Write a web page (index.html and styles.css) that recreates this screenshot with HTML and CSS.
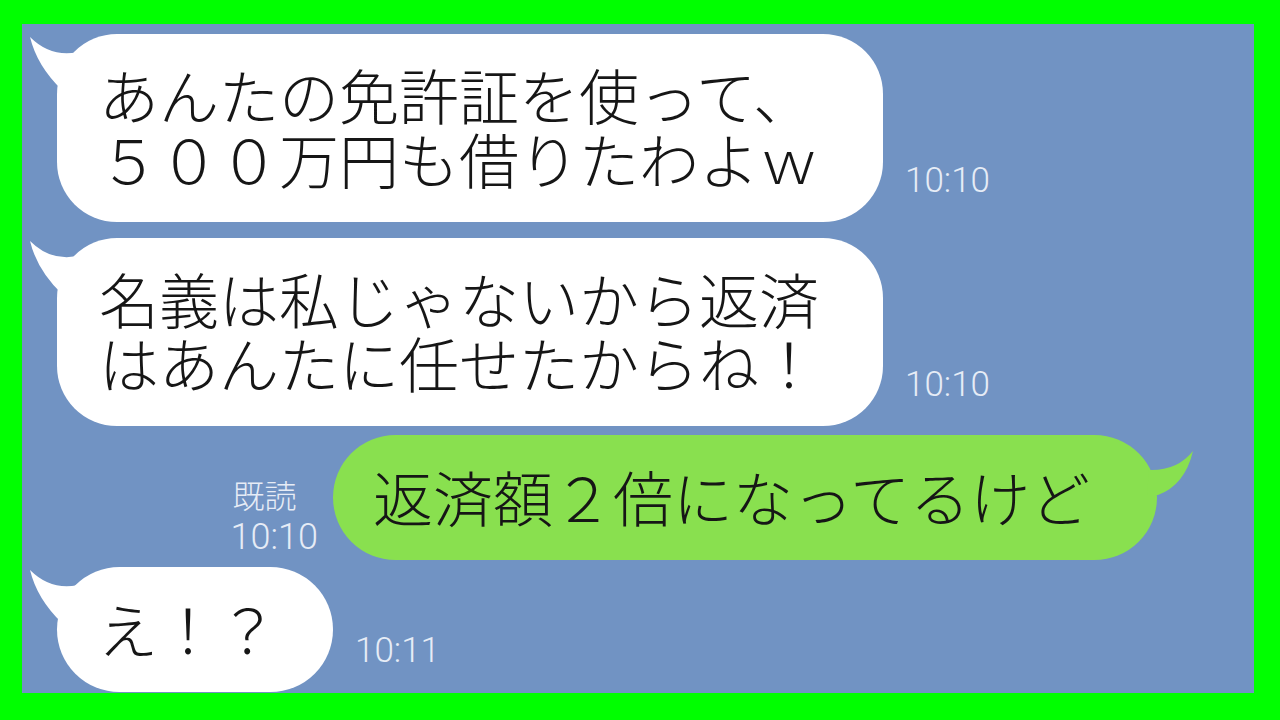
FILE: index.html
```html
<!DOCTYPE html>
<html lang="ja">
<head>
<meta charset="utf-8">
<title>chat</title>
<link rel="stylesheet" href="styles.css">
</head>
<body>
<div class="frame">
  <div class="chat">
    <div class="row row-in row-1">
      <div class="bubble bubble-white">
        <svg class="tail tail-left" viewBox="0 0 90 60" width="90" height="60"><path d="M3 3 Q10 32 35 56 L60 40 L86 2 Q36 36 3 3 Z" fill="#ffffff"/></svg>
        <p class="msg"><span class="line">あんたの免許証を使って、</span><span class="line">５００万円も借りたわよｗ</span></p>
      </div>
      <span class="time">10:10</span>
    </div>
    <div class="row row-in row-2">
      <div class="bubble bubble-white">
        <svg class="tail tail-left" viewBox="0 0 90 60" width="90" height="60"><path d="M3 3 Q10 32 35 56 L60 40 L86 2 Q36 36 3 3 Z" fill="#ffffff"/></svg>
        <p class="msg"><span class="line">名義は私じゃないから返済</span><span class="line">はあんたに任せたからね！</span></p>
      </div>
      <span class="time">10:10</span>
    </div>
    <div class="row row-out row-3">
      <div class="read">
        <span class="read-label">既読</span>
        <span class="read-time">10:10</span>
      </div>
      <div class="bubble bubble-green">
        <svg class="tail tail-right" viewBox="0 0 50 60" width="50" height="60"><path d="M46 6 Q30 26 2 25 L0 50 L11 50 Q38 40 46 6 Z" fill="#89e04f"/></svg>
        <p class="msg"><span class="line">返済額２倍になってるけど</span></p>
      </div>
    </div>
    <div class="row row-in row-4">
      <div class="bubble bubble-white bubble-short">
        <svg class="tail tail-left" viewBox="0 0 90 60" width="90" height="60"><path d="M3 3 Q10 32 35 56 L60 40 L86 2 Q36 36 3 3 Z" fill="#ffffff"/></svg>
        <p class="msg"><span class="line">え！？</span></p>
      </div>
      <span class="time">10:11</span>
    </div>
  </div>
</div>
</body>
</html>
```
FILE: styles.css
```css
html, body {
  margin: 0;
  padding: 0;
}
body {
  width: 1280px;
  height: 720px;
  overflow: hidden;
  font-family: "Noto Sans CJK JP", "Noto Sans", sans-serif;
}
.frame {
  width: 1280px;
  height: 720px;
  box-sizing: border-box;
  background: #00ff00;
  padding: 24px 26px 27px 22px;
}
.chat {
  width: 100%;
  height: 100%;
  background: #7193c3;
  box-sizing: border-box;
  padding-top: 10px;
  display: flex;
  flex-direction: column;
}
.row {
  display: flex;
  align-items: flex-end;
}
.row-in {
  padding-left: 35px;
}
.row-out {
  justify-content: flex-end;
  padding-right: 97px;
}
.row-2 { margin-top: 16px; }
.row-3 { margin-top: 9px; }
.row-4 { margin-top: 7px; }

.bubble {
  position: relative;
  border-radius: 60px;
  padding: 28px 64px 32px 42px;
}
.bubble-white {
  background: #ffffff;
}
.bubble-green {
  background: #89e04f;
  border-radius: 63px;
  padding: 29px 67px 32px 40px;
}
.bubble-short {
  border-radius: 63px;
  padding: 29px 55px 32px 41px;
}
.msg {
  position: relative;
  margin: 0;
  font-size: 60px;
  font-weight: 300;
  color: #161616;
  white-space: nowrap;
}
.line {
  display: block;
  height: 64px;
  line-height: 64px;
}
.tail {
  position: absolute;
  display: block;
}
.tail-left {
  left: -30px;
  top: 0;
}
.tail-right {
  right: -40px;
  top: 10px;
}
.time {
  font-family: Roboto, "Noto Sans", sans-serif;
  font-weight: 300;
  font-size: 35px;
  line-height: 35px;
  color: #e6ecf6;
  margin-left: 22px;
  margin-bottom: 24px;
}
.read {
  display: flex;
  flex-direction: column;
  align-items: flex-start;
  margin-right: 15px;
  margin-bottom: 5px;
  color: #e6ecf6;
}
.read-label {
  font-size: 32px;
  line-height: 36px;
  font-weight: 300;
}
.read-time {
  font-family: Roboto, "Noto Sans", sans-serif;
  font-weight: 300;
  font-size: 36px;
  line-height: 35px;
  margin-top: 8px;
  margin-left: -2px;
}
```
